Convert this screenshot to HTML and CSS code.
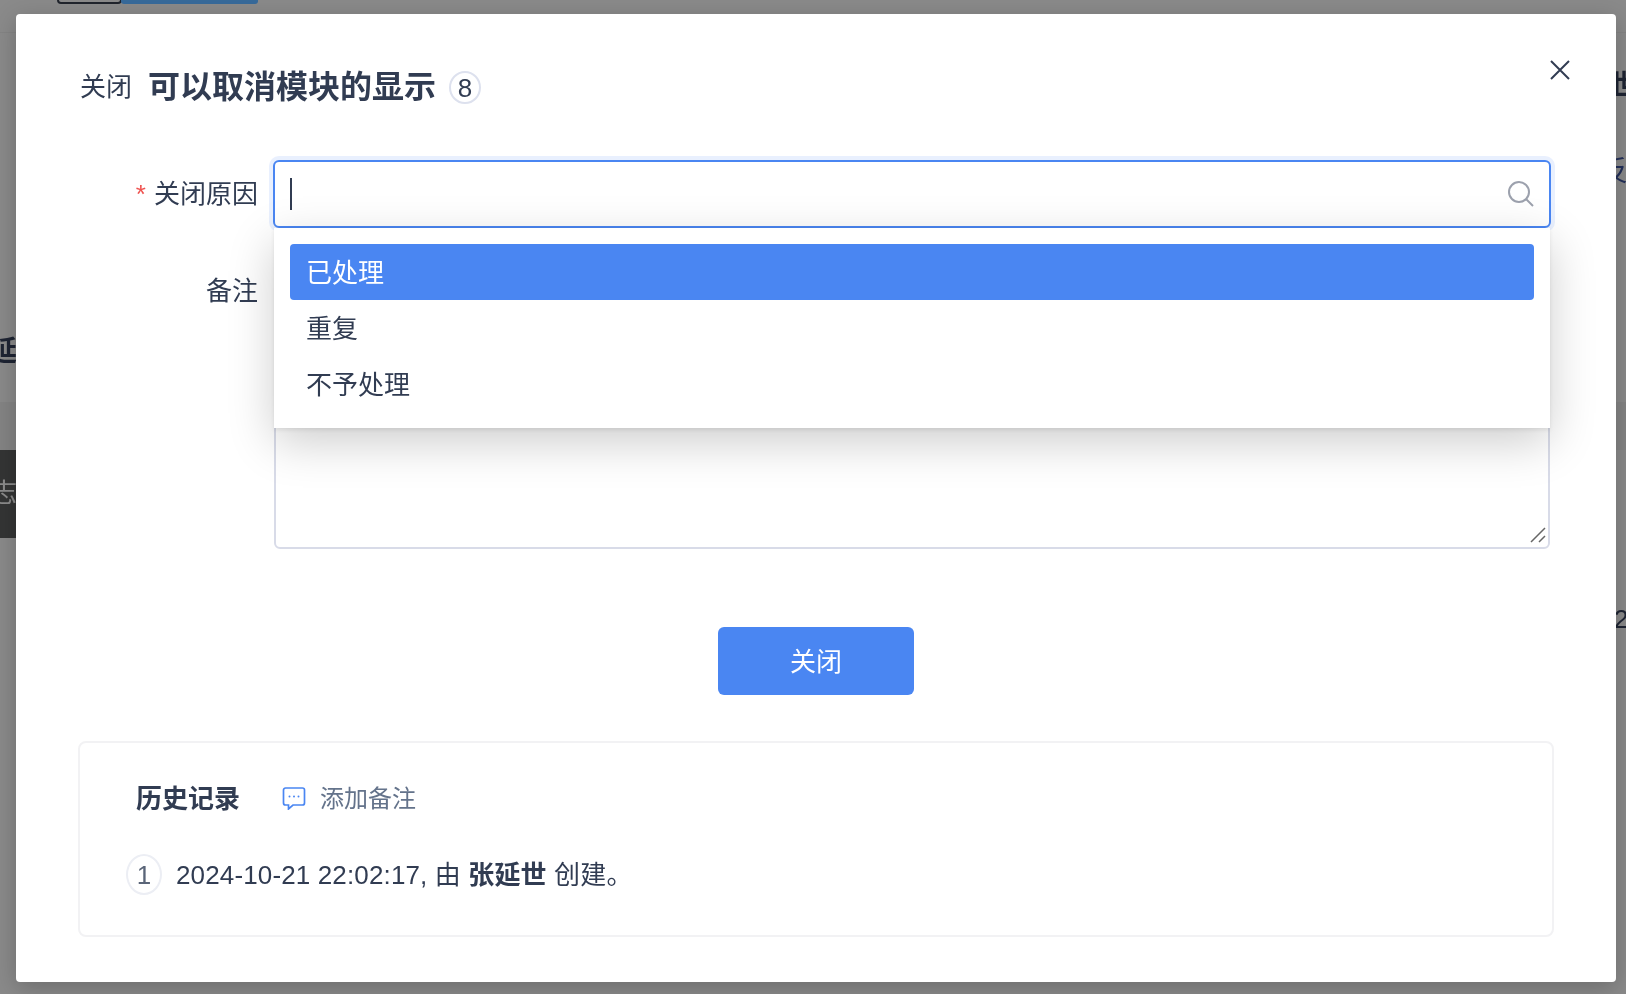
FILE: index.html
```html
<!DOCTYPE html>
<html lang="zh-CN">
<head>
<meta charset="utf-8">
<title>关闭</title>
<link rel="stylesheet" href="styles.css">
</head>
<body>
<div class="backdrop">
  <span class="bg-tab"></span>
  <span class="bg-tab-blue"></span>
  <span class="bg-band bg-band-a"></span>
  <span class="bg-band bg-band-b"></span>
  <span class="bg-text bg-yan">延</span>
  <span class="bg-dark"><span class="bg-zhi">志</span></span>
  <span class="bg-text bg-shi">世</span>
  <span class="bg-text bg-fan">反</span>
  <span class="bg-text bg-two">2</span>
</div>
<main class="modal">
  <button class="close-x" type="button" aria-label="关闭">
    <svg width="20" height="20" viewBox="0 0 20 20"><path d="M1 1L19 19M19 1L1 19" fill="none" stroke="#313c52" stroke-width="2"/></svg>
  </button>
  <header class="head">
    <span class="head-label">关闭</span>
    <h1 class="head-title">可以取消模块的显示</h1>
    <span class="head-badge">8</span>
  </header>
  <form class="form">
    <div class="row">
      <label class="row-label"><span class="star">*</span>关闭原因</label>
      <div class="picker">
        <div class="picker-input">
          <span class="caret"></span>
          <svg class="search" width="26" height="26" viewBox="0 0 26 26"><circle cx="11" cy="11" r="10" fill="none" stroke="#9ca1ad" stroke-width="2"/><path d="M18 18L25 25" fill="none" stroke="#9ca1ad" stroke-width="2"/></svg>
        </div>
        <ul class="menu">
          <li class="menu-item is-active">已处理</li>
          <li class="menu-item">重复</li>
          <li class="menu-item">不予处理</li>
        </ul>
      </div>
    </div>
    <div class="row row-note">
      <label class="row-label">备注</label>
      <div class="note">
        <svg class="resizer" width="16" height="16" viewBox="0 0 16 16"><path d="M1 15L15 1M9 15L15 9" fill="none" stroke="#666" stroke-width="1.5"/></svg>
      </div>
    </div>
    <div class="actions"><button class="primary" type="button">关闭</button></div>
  </form>
  <section class="history">
    <div class="history-head">
      <h2 class="history-title">历史记录</h2>
      <a class="history-add">
        <svg class="history-icon" width="24" height="24" viewBox="0 0 24 24"><path d="M3.5 2H20.5A2 2 0 0 1 22.500 4V17A2 2 0 0 1 20.500 19H11L6.500 23V19H3.500A2 2 0 0 1 1.500 17V4A2 2 0 0 1 3.500 2Z" fill="none" stroke="#4a86f2" stroke-width="1.700"/><circle cx="7.500" cy="10.500" r="1" fill="#4a86f2"/><circle cx="12" cy="10.500" r="1" fill="#4a86f2"/><circle cx="16.500" cy="10.500" r="1" fill="#4a86f2"/></svg>
        <span class="history-add-text">添加备注</span>
      </a>
    </div>
    <div class="history-item">
      <span class="history-num">1</span>
      <span class="history-text">2024-10-21 22:02:17, 由 <strong>张延世</strong> 创建。</span>
    </div>
  </section>
</main>
</body>
</html>
```
FILE: styles.css
```css
* { box-sizing: border-box; }
html, body { margin: 0; height: 100%; overflow: hidden; }
body {
  font-family: "Liberation Sans", "Noto Sans CJK SC", sans-serif;
  color: #313c52;
  background: #8a8a8a;
}
.backdrop { position: fixed; inset: 0; overflow: hidden; }
.bg-tab { position: absolute; left: 57px; top: -4px; width: 65px; height: 8px; border: 2px solid #20242c; border-radius: 4px; }
.bg-tab-blue { position: absolute; left: 121px; top: -4px; width: 137px; height: 8px; background: #376a9a; border-radius: 3px; }
.bg-band { position: absolute; left: 0; width: 100%; }
.bg-band-a { top: 32px; height: 1px; background: #848484; }
.bg-band-b { top: 402px; height: 48px; background: #848484; }
.bg-text { position: absolute; color: #1e2433; font-size: 28px; line-height: 1; }
.bg-yan { left: -11px; top: 338px; font-weight: 700; }
.bg-shi { left: 1610px; top: 72px; font-weight: 700; }
.bg-fan { left: 1600px; top: 158px; color: #23305a; }
.bg-two { left: 1614px; top: 606px; font-size: 26px; }
.bg-dark { position: absolute; left: 0; top: 450px; width: 16px; height: 88px; background: #343535; overflow: hidden; }
.bg-zhi { position: absolute; left: -9px; top: 30px; font-size: 26px; line-height: 1; color: #8c8c8c; }

.modal {
  position: fixed;
  left: 16px;
  top: 14px;
  width: 1600px;
  height: 968px;
  padding: 53px 62px 0;
  background: #fff;
  border-radius: 4px;
  box-shadow: 0 6px 24px rgba(0, 0, 0, .22);
}
.close-x { position: absolute; right: 46px; top: 46px; width: 20px; height: 20px; padding: 0; border: 0; background: none; display: flex; }
.head { display: flex; align-items: center; height: 40px; padding-left: 2px; }
.head-label { font-size: 26px; line-height: 40px; }
.head-title { margin: 0 0 0 16px; font-size: 32px; line-height: 40px; font-weight: 700; }
.head-badge {
  margin-left: 13px;
  width: 32px;
  height: 33px;
  border: 2px solid #dde1ee;
  border-radius: 50%;
  font-size: 26px;
  line-height: 31px;
  text-align: center;
}
.form { margin-top: 53px; }
.row { display: flex; }
.row-label {
  width: 195px;
  flex: none;
  padding-right: 15px;
  height: 68px;
  font-size: 26px;
  line-height: 68px;
  text-align: right;
}
.star { color: #ef5350; margin-right: 8px; }
.picker { position: relative; flex: 1; margin-right: 3px; }
.picker-input {
  height: 68px;
  display: flex;
  align-items: center;
  justify-content: space-between;
  padding: 0 15px 0 15px;
  background: #fff;
  border: 2px solid #4a86f2;
  border-radius: 6px;
  box-shadow: 0 0 0 4px #e9f0fe;
}
.caret { width: 2px; height: 32px; background: #313c52; }
.search { flex: none; }
.menu {
  position: absolute;
  z-index: 2;
  left: 1px;
  right: 1px;
  top: 68px;
  margin: 0;
  padding: 16px;
  height: 200px;
  list-style: none;
  background: #fff;
  box-shadow: 0 14px 44px rgba(0, 0, 0, .2), 0 2px 4px rgba(0, 0, 0, .08);
}
.menu-item {
  height: 56px;
  padding-left: 16px;
  font-size: 26px;
  line-height: 58px;
  border-radius: 4px;
}
.is-active { background: #4a86f2; color: #fff; }
.row-note { margin-top: 29px; }
.note {
  position: relative;
  flex: 1;
  height: 292px;
  margin: 0 4px 0 1px;
  background: #fff;
  border: 2px solid #d8dbe8;
  border-radius: 6px;
}
.resizer { position: absolute; right: 2px; bottom: 4px; }
.actions { display: flex; justify-content: center; margin-top: 78px; }
.primary {
  width: 196px;
  height: 68px;
  padding: 0 0 4px;
  border: 0;
  border-radius: 6px;
  background: #4a86f2;
  color: #fff;
  font: inherit;
  font-size: 26px;
}
.history {
  height: 196px;
  margin-top: 46px;
  padding: 36px 0 0 46px;
  border: 2px solid #f2f2f4;
  border-radius: 8px;
}
.history-head { display: flex; align-items: center; height: 40px; padding-left: 10px; }
.history-title { margin: 0; font-size: 26px; line-height: 40px; font-weight: 700; width: 146px; }
.history-add { display: flex; align-items: center; gap: 14px; color: #64738b; }
.history-icon { margin-bottom: 2px; }
.history-add-text { font-size: 24px; line-height: 36px; }
.history-item { display: flex; align-items: center; margin-top: 35px; }
.history-num {
  width: 36px;
  height: 41px;
  border: 2px solid #eceef4;
  border-radius: 50%;
  font-size: 26px;
  line-height: 38px;
  text-align: center;
  color: #5a6578;
}
.history-text { margin-left: 14px; font-size: 26px; line-height: 40px; letter-spacing: .14px; }
.history-text strong { font-weight: 700; }
```
